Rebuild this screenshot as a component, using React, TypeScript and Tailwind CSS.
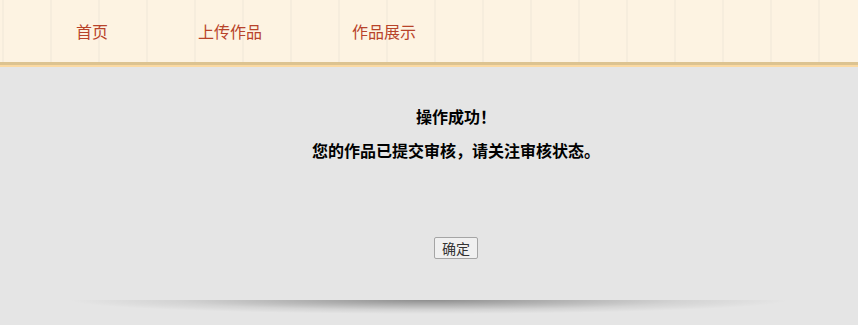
const navItems = [
  { label: "首页", className: "ml-[76px]" },
  { label: "上传作品", className: "ml-[90px]" },
  { label: "作品展示", className: "ml-[90px]" },
];

const App = () => {
  const font = { fontFamily: '"Microsoft YaHei", "Noto Sans CJK SC", sans-serif' };

  return (
    <div className="min-h-[325px] w-full bg-[#e5e5e5]" style={font}>
      <header className="relative h-[62px] bg-[#fdf3e2] bg-[repeating-linear-gradient(90deg,transparent_0px,transparent_2px,#f6eddd_2px,#f6eddd_4px,transparent_4px,transparent_48px)]">
        <nav className="flex h-full items-center">
          {navItems.map((item) => (
            <a
              key={item.label}
              href="#"
              className={`${item.className} text-[16px] leading-none text-[#b8432a]`}
            >
              {item.label}
            </a>
          ))}
        </nav>
      </header>
      <div className="h-[3px] bg-[#dcc391]" />
      <div className="h-[2px] bg-[#fbd9a1]" />

      <main className="flex flex-col items-center pt-[38px]">
        <div className="flex flex-col items-center pl-[54px] [text-spacing-trim:space-all]">
          <p className="text-[16px] font-bold leading-[22px] text-black">操作成功！</p>
          <p className="mt-[12px] text-[16px] font-bold leading-[22px] text-black">
            您的作品已提交审核，请关注审核状态。
          </p>
          <button className="mt-[76px] h-[22px] w-[44px] rounded-[2px] border border-[#a5a5a5] bg-[#f0f0f0] text-[14px] leading-none text-[#333]">
            确定
          </button>
        </div>
        <div className="mt-[41px] h-[14px] w-[720px] bg-[radial-gradient(ellipse_50%_100%_at_50%_0%,rgba(0,0,0,0.38),rgba(0,0,0,0.08)_70%,transparent_100%)]" />
      </main>
    </div>
  );
};

export default App;
